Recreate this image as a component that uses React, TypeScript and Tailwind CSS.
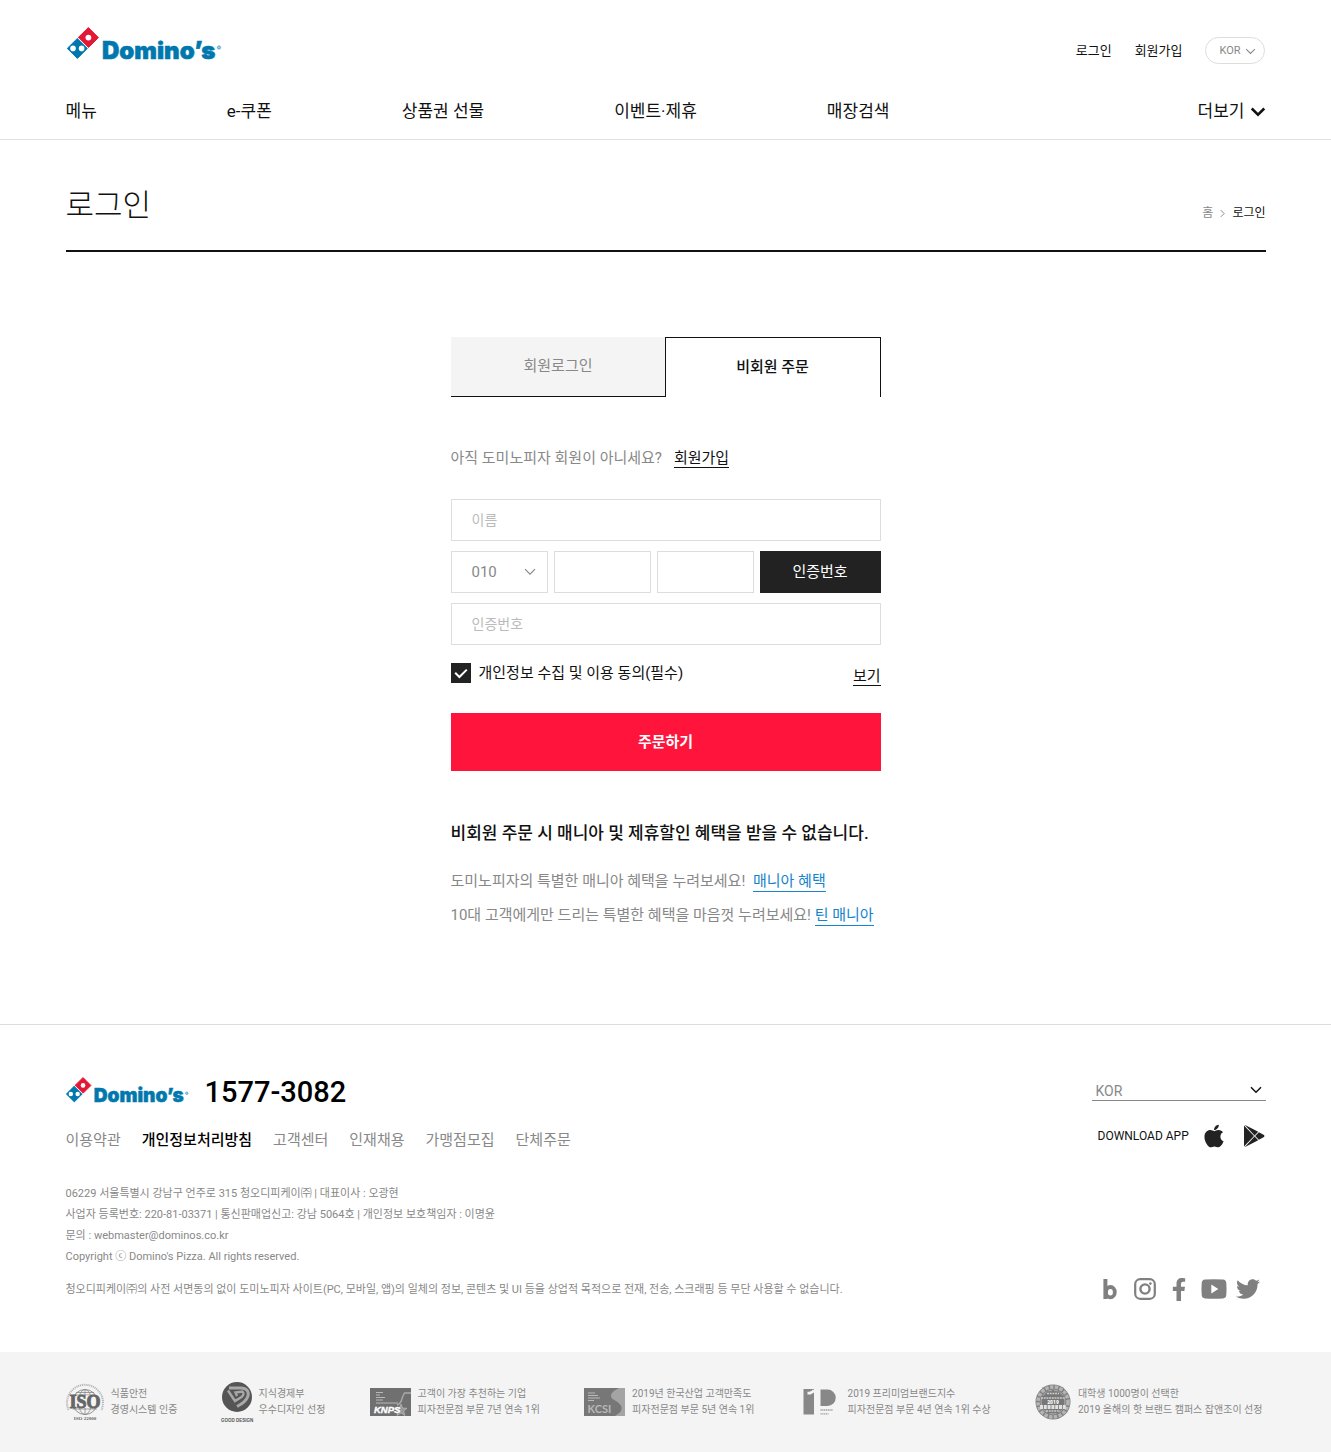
import type { ReactNode } from 'react';
import { FaApple, FaFacebookF, FaTwitter } from 'react-icons/fa';

function Logo({ small = false }: { small?: boolean }) {
  return (
    <svg
      viewBox="1 0 156 34"
      className={small ? 'block h-[27px] w-[124px] overflow-visible' : 'block h-[34px] w-[156px] overflow-visible'}
      role="img"
      aria-label="Domino's"
    >
      <path d="M22.4 0.6 32.4 10.6 22.4 20.6 12.2 10.6Z" fill="#e31837" stroke="#e31837" strokeWidth="1" strokeLinejoin="round" />
      <path d="M11.4 11.4 21.4 21.4 11.4 31.4 1.3 21.4Z" fill="#0078ae" stroke="#0078ae" strokeWidth="1" strokeLinejoin="round" />
      <path d="M11.6 10.8 22 21.2" stroke="#fff" strokeWidth="1" />
      <circle cx="22.4" cy="10.6" r="2.9" fill="#fff" />
      <circle cx="7" cy="21.4" r="2.8" fill="#fff" />
      <circle cx="15.6" cy="21.4" r="2.8" fill="#fff" />
      <text x="36" y="31.5" fontSize="24" fontWeight="900" fill="#0078ae" stroke="#0078ae" strokeWidth="0.6" fontFamily="Inter, sans-serif">
        Domino’s
      </text>
      <circle cx="153" cy="20.5" r="1.6" fill="#a9d0e2" stroke="#3c98c0" strokeWidth="0.8" />
    </svg>
  );
}

function Chevron({ className, weight = 1.2 }: { className: string; weight?: number }) {
  return (
    <svg viewBox="0 0 12 8" className={className} fill="none" stroke="currentColor" strokeWidth={weight} aria-hidden="true">
      <path d="M1 1.2 6 6.2 11 1.2" />
    </svg>
  );
}

const nav = ['메뉴', 'e-쿠폰', '상품권 선물', '이벤트·제휴', '매장검색'];

function Header() {
  return (
    <header className="border-b border-[#e0e0e0]">
      <div className="mx-auto max-w-[1200px]">
        <div className="flex items-start justify-between pt-[27px]">
          <a href="#home" className="pl-px"><Logo /></a>
          <div className="flex items-center pt-[10px] text-[13px]">
            <a href="#login">로그인</a>
            <a href="#join" className="ml-[23px]">회원가입</a>
            <button type="button" className="ml-[22px] mr-px flex h-[27px] w-[60px] items-center justify-center gap-1 rounded-full border border-[#ddd] pl-1.5 pt-0.5 text-[11px] text-[#888]">
              KOR
              <Chevron className="h-[7px] w-[11px]" />
            </button>
          </div>
        </div>
        <nav className="flex h-[75px] items-center justify-between pt-[20px] text-[17px]">
          <ul className="flex gap-[130px]">
            {nav.map((n) => (
              <li key={n}><a href="#menu">{n}</a></li>
            ))}
          </ul>
          <button type="button" className="flex items-center gap-[5px]">
            더보기
            <Chevron className="h-[10px] w-4" weight={2} />
          </button>
        </nav>
      </div>
    </header>
  );
}

const field = 'h-[42px] min-w-0 rounded-none border border-[#ddd] bg-white text-[14px] outline-none placeholder:text-[#bbb]';

function OrderForm() {
  return (
    <div className="mx-auto mt-[85px] max-w-[430px] text-[15px]">
      <div role="tablist" className="grid h-[60px] grid-cols-2">
        <button type="button" role="tab" aria-selected="false" className="border-b border-[#111] bg-[#f4f4f4] text-[#888]">회원로그인</button>
        <button type="button" role="tab" aria-selected="true" className="-ml-px border border-b-0 border-[#111] bg-white font-medium">비회원 주문</button>
      </div>

      <p className="mt-[49px] leading-6 text-[#888]">
        아직 도미노피자 회원이 아니세요?
        <a href="#join" className="ml-3 inline-block border-b border-[#111] leading-[18px] text-[#111]">회원가입</a>
      </p>

      <form className="mt-[29px] flex flex-col gap-[10px]" onSubmit={(e) => e.preventDefault()}>
        <input aria-label="이름" placeholder="이름" className={`${field} px-5`} />
        <div className="grid grid-cols-[97fr_97fr_97fr_121fr] gap-[6px]">
          <div className="grid items-center">
            <select aria-label="휴대폰 앞자리" className={`${field} col-start-1 row-start-1 appearance-none pl-5 text-[15px]! text-[#888]`}>
              <option>010</option>
              <option>011</option>
            </select>
            <Chevron className="pointer-events-none col-start-1 row-start-1 mr-3 h-2 w-3 justify-self-end text-[#888]" />
          </div>
          <input aria-label="휴대폰 가운데 자리" className={`${field} px-3`} />
          <input aria-label="휴대폰 끝자리" className={`${field} px-3`} />
          <button type="button" className="bg-[#222] text-white">인증번호</button>
        </div>
        <input aria-label="인증번호" placeholder="인증번호" className={`${field} px-5`} />

        <div className="mt-2 flex items-start justify-between">
          <label className="flex items-center gap-2">
            <span className="grid">
              <input type="checkbox" defaultChecked className="peer col-start-1 row-start-1 size-5 appearance-none border border-[#222] checked:bg-[#222]" />
              <svg viewBox="0 0 20 20" className="pointer-events-none invisible col-start-1 row-start-1 size-5 peer-checked:visible" fill="none" stroke="#fff" strokeWidth="2" aria-hidden="true">
                <path d="M4.2 9.8 8.4 14 15.8 6.6" />
              </svg>
            </span>
            <span className="leading-5">개인정보 수집 및 이용 동의(필수)</span>
          </label>
          <a href="#terms" className="mt-1 border-b border-[#111] leading-[18px]">보기</a>
        </div>

        <button type="submit" className="mt-[17px] h-[58px] bg-[#ff143c] font-bold text-white">주문하기</button>
      </form>

      <p className="mt-[49px] text-[17px] font-medium leading-[26px]">비회원 주문 시 매니아 및 제휴할인 혜택을 받을 수 없습니다.</p>
      <div className="mt-[18px] leading-[34px] text-[#888]">
        <p>도미노피자의 특별한 매니아 혜택을 누려보세요! <a href="#mania" className="ml-1 inline-block border-b border-current leading-5 text-[#1484cc]">매니아 혜택</a></p>
        <p>10대 고객에게만 드리는 특별한 혜택을 마음껏 누려보세요! <a href="#teen" className="inline-block border-b border-current leading-5 text-[#1484cc]">틴 매니아</a></p>
      </div>
    </div>
  );
}

function PlayIcon() {
  return (
    <svg viewBox="0 0 22 24" className="h-6 w-[22px]" fill="#222" aria-hidden="true">
      <path d="M1 1.6 11 12 1 22.4Z" />
      <path d="M1.6 .8 15.2 7.8 11.6 11.5Z" />
      <path d="M1.6 23.2 15.2 16.2 11.6 12.5Z" />
      <path d="M15.9 8.2 21 11Q22 12 21 13L15.9 15.8 12.2 12Z" />
    </svg>
  );
}

function Social() {
  return (
    <div className="flex items-center pr-[6px] text-[#808080]">
      <a href="#blog" aria-label="블로그">
        <svg viewBox="0 0 14 22" className="h-[22px] w-[14px]" fill="none" stroke="currentColor" aria-hidden="true">
          <path d="M2.4 1v20" strokeWidth="4" />
          <ellipse cx="7.4" cy="14.2" rx="4.4" ry="5.2" strokeWidth="3.8" />
        </svg>
      </a>
      <a href="#instagram" aria-label="인스타그램" className="ml-[17px]">
        <svg viewBox="0 0 22 22" className="size-[22px]" fill="none" stroke="currentColor" aria-hidden="true">
          <rect x="1.2" y="1.2" width="19.6" height="19.6" rx="5" strokeWidth="2.2" />
          <circle cx="11" cy="11" r="4.6" strokeWidth="2.4" />
          <circle cx="16.4" cy="5.6" r="1.3" fill="currentColor" stroke="none" />
        </svg>
      </a>
      <a href="#facebook" aria-label="페이스북" className="ml-[13px]"><FaFacebookF className="h-[23px] w-5" /></a>
      <a href="#youtube" aria-label="유튜브" className="ml-3">
        <svg viewBox="0 0 26 20" className="h-5 w-[26px]" aria-hidden="true">
          <path fill="currentColor" fillRule="evenodd" d="M4 .6Q13 0 22 .6 25 .8 25.3 4 25.8 10 25.3 16 25 19.2 22 19.4 13 20 4 19.4 1 19.2.7 16 .2 10 .7 4 1 .8 4 .6ZM10.3 5.5v9l7-4.5Z" />
        </svg>
      </a>
      <a href="#twitter" aria-label="트위터" className="ml-[9px]"><FaTwitter className="size-6" /></a>
    </div>
  );
}

const footerLinks = ['이용약관', '개인정보처리방침', '고객센터', '인재채용', '가맹점모집', '단체주문'];

function Footer() {
  return (
    <footer className="mt-[92px] border-t border-[#ddd]">
      <div className="mx-auto max-w-[1200px] pb-[51px] pt-[46px]">
        <div className="flex justify-between">
          <div>
            <div className="flex items-start gap-[15px]">
              <div className="pt-1.5"><Logo small /></div>
              <a href="tel:1577-3082" className="text-[29px] font-medium leading-[42px] text-black">1577-3082</a>
            </div>
            <ul className="mt-[15px] flex gap-[21px] text-[15px] leading-6 text-[#888]">
              {footerLinks.map((l, i) => (
                <li key={l} className={i === 1 ? 'font-medium text-black' : ''}><a href="#info">{l}</a></li>
              ))}
            </ul>
          </div>
          <div className="w-[174px]">
            <div className="mt-2 grid items-center border-b border-[#888]">
              <select aria-label="언어" className="col-start-1 row-start-1 h-[21px] appearance-none bg-transparent pl-1 pt-0.5 text-[14px] text-[#888] outline-none">
                <option>KOR</option>
                <option>ENG</option>
              </select>
              <Chevron className="pointer-events-none col-start-1 row-start-1 mr-1 h-2 w-3 justify-self-end" weight={1.5} />
            </div>
            <div className="mt-[22px] flex items-center justify-between pl-[6px] pr-px text-[12px]">
              DOWNLOAD APP
              <span className="flex items-center gap-4">
                <a href="#ios" aria-label="App Store"><FaApple className="size-[26px] text-[#222]" /></a>
                <a href="#android" aria-label="Google Play"><PlayIcon /></a>
              </span>
            </div>
          </div>
        </div>
        <address className="mt-[31px] text-[11px] not-italic leading-[21px] text-[#888]">
          <p>06229 서울특별시 강남구 언주로 315 청오디피케이㈜ | 대표이사 : 오광현</p>
          <p>사업자 등록번호: 220-81-03371 | 통신판매업신고: 강남 5064호 | 개인정보 보호책임자 : 이명윤</p>
          <p>문의 : <a href="mailto:webmaster@dominos.co.kr">webmaster@dominos.co.kr</a></p>
          <p>Copyright ⓒ Domino's Pizza. All rights reserved.</p>
        </address>
        <div className="mt-[10px] flex items-center justify-between text-[11px] leading-[21px] text-[#888]">
          <p>청오디피케이㈜의 사전 서면동의 없이 도미노피자 사이트(PC, 모바일, 앱)의 일체의 정보, 콘텐츠 및 UI 등을 상업적 목적으로 전재, 전송, 스크래핑 등 무단 사용할 수 없습니다.</p>
          <Social />
        </div>
      </div>
    </footer>
  );
}

const IsoMark = () => (
  <svg viewBox="0 0 38 38" className="size-[38px] overflow-visible" aria-hidden="true">
    <g fill="none" stroke="#888">
      <path d="M2.5 27A18 18 0 1 1 35.5 27" strokeWidth="2" strokeDasharray="1.1 .8" opacity=".6" />
      <circle cx="19" cy="19" r="12.5" strokeWidth=".9" />
      <ellipse cx="19" cy="19" rx="6.5" ry="12.5" strokeWidth=".8" />
      <path d="M19 6v26M8.5 12h21M7 26h24M10 9.5h18" strokeWidth=".8" />
    </g>
    <rect x="3" y="12.5" width="32" height="12.5" fill="#f4f4f4" />
    <text x="19" y="24.5" textAnchor="middle" fontFamily="Liberation Serif, serif" fontWeight="700" fontSize="18" fill="#666" stroke="#666" strokeWidth=".9">ISO</text>
    <text x="19" y="36.5" textAnchor="middle" fontFamily="Liberation Serif, serif" fontWeight="700" fontSize="5" fill="#666">ISO 22000</text>
  </svg>
);

const DesignMark = () => (
  <svg viewBox="0 0 30 42" className="h-[42px] w-[30px] overflow-visible" aria-hidden="true">
    <circle cx="15" cy="16" r="15" fill="#555" />
    <g fill="none" stroke="#a8a8a8">
      <path d="M7 7H19Q27.5 7.5 26 15 24 21 15 25.5" strokeWidth="3" />
      <path d="M6 9.5 13 20 19.5 16Q23 13 20.5 10.5L13.5 11.5 15 15" strokeWidth="2.4" />
    </g>
    <text x="15" y="41" textAnchor="middle" fontFamily="Liberation Sans, sans-serif" fontWeight="700" fontSize="4.5" fill="#555">GOOD DESIGN</text>
  </svg>
);

const KnpsMark = () => (
  <svg viewBox="0 0 41 28" className="h-7 w-[41px]" aria-hidden="true">
    <rect width="41" height="28" fill="#707070" />
    <path d="M6 4.5h7M6 7h4M6 9.5h9M6 12h7M6 15h22" stroke="#ccc" strokeWidth=".8" />
    <path d="M27 17Q31 16 32.5 9L34.5 5H41" fill="none" stroke="#aaa" strokeWidth="1.4" />
    <path d="m31 16 1.7 4 4.3.3-3.3 2.7 1.3 4.5-4-2.5-4 2.5 1.3-4.5-3-2.7 4-.3Z" fill="#999" stroke="#ccc" strokeWidth=".5" />
    <text x="4" y="25" fontFamily="Liberation Sans, sans-serif" fontWeight="700" fontStyle="italic" fontSize="9.5" fill="#fff" stroke="#fff" strokeWidth=".4">KNPS</text>
  </svg>
);

const KcsiMark = () => (
  <svg viewBox="0 0 41 28" className="h-7 w-[41px]" aria-hidden="true">
    <rect width="41" height="28" fill="#777" />
    <path d="M35 0H41V28H31Q40 23 37 17.5 34 13.5 28.5 11 23.5 5.5 35 0Z" fill="#a4a4a4" />
    <path d="M4 5h7M4 7.5h10M4 10h12M4 12.5h6" stroke="#ccc" strokeWidth=".8" />
    <text x="3.5" y="24.5" fontFamily="Lato, sans-serif" fontWeight="700" fontSize="11" fill="#b8b8b8">KCSI</text>
  </svg>
);

const PremiumMark = () => (
  <svg viewBox="0 0 42 36" className="h-9 w-[42px]" aria-hidden="true">
    <path d="M4.5 5H15v25.5H4.500Z" fill="#888" />
    <path d="M8.500 7.800Q12.500 7.800 13.500 5.800H15V8.500L11.500 10.500H8.500Z" fill="#f4f4f4" />
    <path d="M21.500 5.500h7a8 8 0 0 1 0 16.500h-7Z" fill="#888" />
    <path d="M21.500 26h12M21.500 29.800h8" stroke="#999" strokeWidth="1.3" strokeDasharray="1.2 .6" />
  </svg>
);

const HotBrandMark = () => (
  <svg viewBox="0 0 36 36" className="size-9" aria-hidden="true">
    <circle cx="18" cy="18" r="17.5" fill="#808080" />
    <g fill="none" stroke="#b4b4b4">
      <circle cx="18" cy="18" r="15" strokeWidth="3.5" strokeDasharray="3.4 1.4" />
      <circle cx="18" cy="18" r="12" strokeWidth=".8" />
    </g>
    <path d="m18 5 2 4 4-2 1 4 4 1v13l-4 1-2 4-5-2-5 2-2-4-4-1V12l4-1 1-4 4 2Z" fill="#777" />
    <path d="M6 14h24M12 9.5h12M11 27h14" stroke="#ccc" strokeWidth="1.5" strokeDasharray="2 .7" />
    <text x="18" y="20" textAnchor="middle" fontFamily="Roboto, sans-serif" fontWeight="900" fontSize="5" fill="#fff">2019</text>
    <path d="M5 23h26" stroke="#e0e0e0" strokeWidth="4" strokeDasharray="3 .8" />
  </svg>
);

const awards: { mark: ReactNode; lines: [string, string] }[] = [
  { mark: <IsoMark />, lines: ['식품안전', '경영시스템 인증'] },
  { mark: <DesignMark />, lines: ['지식경제부', '우수디자인 선정'] },
  { mark: <KnpsMark />, lines: ['고객이 가장 추천하는 기업', '피자전문점 부문 7년 연속 1위'] },
  { mark: <KcsiMark />, lines: ['2019년 한국산업 고객만족도', '피자전문점 부문 5년 연속 1위'] },
  { mark: <PremiumMark />, lines: ['2019 프리미엄브랜드지수', '피자전문점 부문 4년 연속 1위 수상'] },
  { mark: <HotBrandMark />, lines: ['대학생 1000명이 선택한', '2019 올해의 핫 브랜드 캠퍼스 잡앤조이 선정'] },
];

function Awards() {
  return (
    <section className="bg-[#f4f4f4]">
      <ul className="mx-auto flex h-[100px] max-w-[1200px] items-center justify-between pr-[3px] text-[10px] leading-4 text-[#888]">
        {awards.map((a) => (
          <li key={a.lines[0]} className="flex items-center gap-[7px] whitespace-nowrap">
            {a.mark}
            <p>{a.lines[0]}<br />{a.lines[1]}</p>
          </li>
        ))}
      </ul>
    </section>
  );
}

export default function App() {
  return (
    <div className="bg-white font-[Roboto,'Noto_Sans_CJK_KR',sans-serif] text-[#111]" lang="ko">
      <Header />
      <main>
        <div className="mx-auto flex max-w-[1200px] items-end justify-between border-b-2 border-[#111] pb-[22px] pt-11">
          <h1 className="text-[31px] font-light leading-[44px]">로그인</h1>
          <nav aria-label="현재 위치" className="flex items-center gap-[7px] pb-[3px] text-[12px] leading-6">
            <a href="#home" className="text-[#888]">홈</a>
            <svg viewBox="0 0 6 10" className="h-[9px] w-[5px]" fill="none" stroke="#888" strokeWidth="1.2" aria-hidden="true"><path d="m1 1 4 4-4 4" /></svg>
            <span>로그인</span>
          </nav>
        </div>
        <OrderForm />
      </main>
      <Footer />
      <Awards />
    </div>
  );
}
